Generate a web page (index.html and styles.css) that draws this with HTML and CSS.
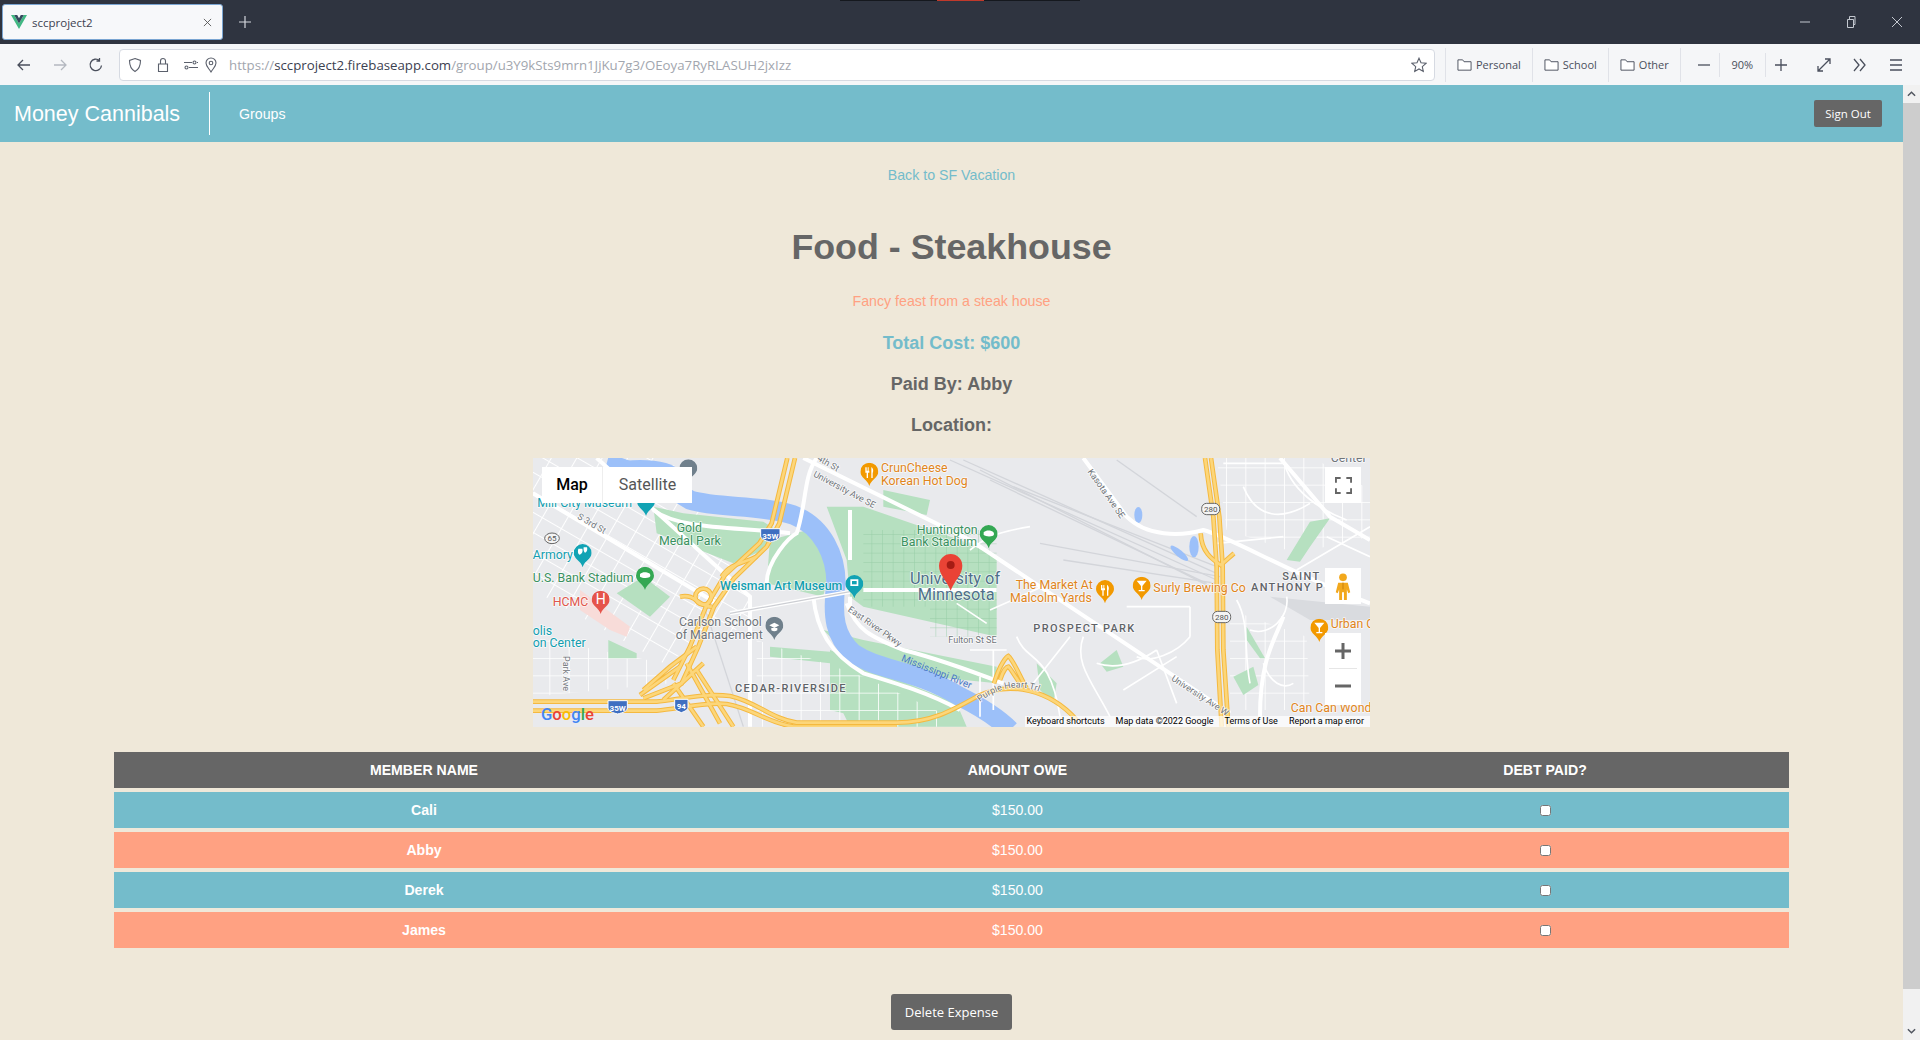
FILE: index.html
```html
<!DOCTYPE html>
<html lang="en">
<head>
  <meta charset="UTF-8">
  <title>sccproject2</title>
  <link rel="stylesheet" href="styles.css">
</head>
<body>
<div class="browser">
  <!-- tab strip -->
  <div class="tabbar">
    <div class="sharing-strip"><span></span></div>
    <div class="tab">
      <svg class="favicon" viewBox="0 0 16 14"><path fill="#41b883" d="M0 0h3.2L8 8.5 12.8 0H16L8 14z"/><path fill="#35495e" d="M3.2 0h3L8 3.2 9.8 0h3L8 8.5z"/></svg>
      <span class="tab-title">sccproject2</span>
      <svg class="tab-close" viewBox="0 0 10 10"><path d="M1 1l8 8M9 1l-8 8"/></svg>
    </div>
    <svg class="newtab" viewBox="0 0 12 12"><path d="M6 0v12M0 6h12"/></svg>
    <div class="window-controls">
      <svg viewBox="0 0 12 12"><path d="M1 6h10"/></svg>
      <svg viewBox="0 0 12 12"><path d="M2.500 3.500h6v8h-6zM4.500 3.500v-3h5.500v8h-1.500"/></svg>
      <svg viewBox="0 0 12 12"><path d="M1 1l10 10M11 1L1 11"/></svg>
    </div>
  </div>

  <!-- nav toolbar -->
  <div class="toolbar">
    <svg class="tool back" viewBox="0 0 16 16"><path d="M14 8H2M7 3L2 8l5 5"/></svg>
    <svg class="tool forward" viewBox="0 0 16 16"><path d="M2 8h12M9 3l5 5-5 5"/></svg>
    <svg class="tool reload" viewBox="0 0 16 16"><path d="M13.500 8.500A5.700 5.700 0 1 1 11.500 3.500M11.500 1v3h-3"/></svg>
    <div class="urlbar">
      <svg class="url-icon" viewBox="0 0 16 16"><path d="M8 1.500l5.500 2c0 5-1 8.500-5.500 11-4.500-2.500-5.500-6-5.500-11z"/></svg>
      <svg class="url-icon" viewBox="0 0 16 16"><path d="M3.500 7h9v7.500h-9zM5.500 7V4a2.500 2.500 0 0 1 5 0v3"/></svg>
      <svg class="url-icon perm" viewBox="0 0 16 16"><circle cx="3.500" cy="10.500" r="1.500"/><circle cx="11.500" cy="5.500" r="1.500"/><path d="M1 5.500h8M14 5.500h1M6 10.500h9"/></svg>
      <svg class="url-icon loc" viewBox="0 0 16 16"><path d="M8 15C5.500 11 3 9 3 6a5 5 0 0 1 10 0c0 3-2.500 5-5 9z"/><circle cx="8" cy="6" r="1.800"/></svg>
      <div class="url"><span class="url-dim">https://</span><span class="url-host">sccproject2.firebaseapp.com</span><span class="url-dim">/group/u3Y9kSts9mrn1JjKu7g3/OEoya7RyRLASUH2jxIzz</span></div>
      <svg class="url-icon star" viewBox="0 0 16 16"><path d="M8 1.200l2 4.600 5 .5-3.700 3.300 1 4.900L8 12l-4.300 2.500 1-4.900L1 6.300l5-.5z"/></svg>
    </div>
    <div class="bookmarks">
      <div class="bookmark"><svg viewBox="0 0 16 14"><path d="M1 12.500v-11h5l1.500 2h7.500v9z"/></svg>Personal</div>
      <div class="bookmark"><svg viewBox="0 0 16 14"><path d="M1 12.500v-11h5l1.500 2h7.500v9z"/></svg>School</div>
      <div class="bookmark"><svg viewBox="0 0 16 14"><path d="M1 12.500v-11h5l1.500 2h7.500v9z"/></svg>Other</div>
    </div>
    <div class="zoom-controls">
      <svg class="tool" viewBox="0 0 14 14"><path d="M1 7h12"/></svg>
      <span class="zoom-value">90%</span>
      <svg class="tool" viewBox="0 0 14 14"><path d="M7 1v12M1 7h12"/></svg>
    </div>
    <svg class="tool expand" viewBox="0 0 16 16"><path d="M2 14L14 2M9 2h5v5M2 9v5h5"/></svg>
    <svg class="tool more" viewBox="0 0 16 16"><path d="M3 2l5 6-5 6M9 2l5 6-5 6"/></svg>
    <svg class="tool menu" viewBox="0 0 16 16"><path d="M2 3h12M2 8h12M2 13h12"/></svg>
  </div>

  <div class="viewport">
    <div class="page">
      <nav class="navbar">
        <a class="brand">Money Cannibals</a>
        <a class="nav-link">Groups</a>
        <button class="btn btn-signout">Sign Out</button>
      </nav>

      <main class="expense">
        <a class="back-link">Back to SF Vacation</a>
        <h1>Food - Steakhouse</h1>
        <p class="description">Fancy feast from a steak house</p>
        <h3 class="total">Total Cost: $600</h3>
        <h3 class="detail">Paid By: Abby</h3>
        <h3 class="detail">Location:</h3>

        <div class="map">
          <!-- viewBox units are 1/3 px, that was easier to read off the map -->
          <svg class="map-canvas" viewBox="9 24 2511 807">
            <defs>
              <pattern id="gridSkew" width="66" height="52" patternUnits="userSpaceOnUse" patternTransform="rotate(30)">
                <path d="M0 0H66M0 0V52" stroke="#fff" stroke-width="6" fill="none"/>
              </pattern>
              <pattern id="gridFlat" width="58" height="52" patternUnits="userSpaceOnUse">
                <path d="M0 0H58M0 0V52" stroke="#fff" stroke-width="5" fill="none"/>
              </pattern>
              <pattern id="gridCampus" width="32" height="28" patternUnits="userSpaceOnUse">
                <path d="M0 0H32M0 0V28" stroke="#8fc8a0" stroke-width="3" fill="none"/>
              </pattern>
              <symbol id="pin" viewBox="0 0 54 70">
                <path d="M27 70C22 50 0 45 0 27a27 27 0 0 1 54 0c0 18-22 23-27 43z"/>
              </symbol>
              <g id="hwyLines">
                <path d="M795 24L748 220L710 290L612 385L552 470L505 590L455 700L340 745"/>
                <path d="M772 24L725 220L688 280L585 375L528 470L480 590L430 690"/>
                <path d="M9 755H380C440 750 520 728 600 738C680 755 720 805 800 818H1100C1200 818 1260 785 1340 740C1440 690 1560 720 1640 810"/>
                <path d="M9 782H380C440 778 520 755 590 762C670 775 700 815 790 830H1100"/>
                <path d="M500 590L420 650L340 720M470 640L570 820M500 660L610 830M430 700L520 830M450 650L330 735M520 640L400 750"/>
                <path d="M2025 24L2050 200L2060 350L2062 600L2075 830"/>
                <path d="M2043 24L2068 200L2078 350L2080 600L2095 830"/>
                <path d="M2012 250C2015 310 2050 330 2072 345C2090 330 2100 320 2112 310"/>
                <path d="M1392 700C1410 640 1430 620 1435 618C1450 630 1470 680 1490 715M1410 690C1420 660 1430 650 1435 650C1445 660 1455 680 1470 700"/>
                <path d="M450 440C500 430 500 470 545 470"/>
                <circle cx="520" cy="440" r="24"/>
                <path d="M575 380C600 340 640 340 680 320"/>
              </g>
            </defs>

            <rect class="land" x="9" y="24" width="2511" height="807"/>

            <!-- street grids -->
            <polygon fill="url(#gridSkew)" points="9,24 420,24 660,440 660,520 400,640 9,420"/>
            <polygon fill="url(#gridFlat)" points="9,560 400,640 420,700 9,740"/>
            <polygon fill="url(#gridFlat)" points="2060,24 2350,24 2520,120 2520,260 2300,310 2090,240"/>
            <polygon fill="url(#gridFlat)" points="2100,480 2330,560 2340,780 2100,780"/>
            <polygon class="rail-wedge" points="2220,440 2520,470 2520,510 2340,510"/>
            <polygon class="pink" points="150,420 300,530 290,560 240,540 150,480"/>

            <!-- rail lines -->
            <g class="rail">
              <path d="M1260 30L2060 390"/><path d="M1300 30L2060 370"/><path d="M1380 90L2030 400"/>
              <path d="M1450 110L2060 350"/><path d="M1530 280L2070 380"/><path d="M1760 30L2000 200"/>
              <path d="M1350 60L2040 410"/><path d="M1600 330L2060 400"/><path d="M520 460L640 830"/>
            </g>

            <!-- parks -->
            <g class="park">
              <polygon points="370,170 460,190 700,215 740,240 700,300 610,340 380,250"/>
              <polygon points="720,270 870,230 900,330 880,440 710,400"/>
              <polygon points="890,170 1000,170 1290,270 1400,320 1400,560 1000,470 960,440 950,330"/>
              <polygon points="880,540 1000,570 1400,650 1400,700 1100,670 950,610"/>
              <polygon points="900,600 950,620 1010,650 1280,760 1310,830 960,830 940,790 900,780"/>
              <polygon points="720,590 900,605 900,640 720,620"/>
              <polygon points="260,430 340,380 420,440 360,500"/>
              <polygon points="235,570 320,610 320,625 235,625"/>
              <polygon points="1060,120 1200,150 1190,195 1060,170"/>
              <polygon points="2270,330 2340,215 2400,205 2340,290 2310,335"/>
              <polygon points="1710,640 1760,600 1780,650 1730,665"/>
              <polygon points="2110,680 2170,650 2185,705 2140,735"/>
              <polygon points="2150,530 2205,625 2190,625 2150,570"/>
              <polygon points="1520,640 1580,700 1570,760 1530,720"/>
            </g>
            <rect class="campus" x="1000" y="240" width="400" height="230" fill="url(#gridCampus)"/>
            <rect class="campus" x="1200" y="470" width="200" height="90" fill="url(#gridCampus)"/>
            <polygon fill="url(#gridFlat)" points="680,570 1000,680 1260,800 1260,830 680,830"/>

            <!-- water -->
            <path class="river" d="M230 40C300 60 420 110 480 150C560 175 700 165 790 195C880 230 918 320 918 400C905 500 915 560 970 610C1050 665 1150 655 1290 740C1350 770 1400 800 1440 840"/>
            <ellipse class="water" cx="330" cy="60" rx="110" ry="30"/>
            <ellipse class="water" cx="1825" cy="195" rx="12" ry="24"/>
            <ellipse class="water" cx="1992" cy="290" rx="14" ry="32"/>
            <ellipse class="water" cx="1948" cy="310" rx="34" ry="10" transform="rotate(40 1948 310)"/>

            <!-- minor streets -->
            <g class="street" transform="translate(1260 0)">
              <path d="M200 560C230 640 300 600 330 800M60 300C120 250 180 240 240 230M120 480L300 400M250 700L360 560"/>
              <path d="M400 560C370 640 430 700 480 800M440 640C500 660 560 640 620 600M620 600L680 760M520 720L680 620"/>
              <path d="M720 470V560M530 470H720M720 560C680 610 600 640 560 620"/>
              <path d="M860 450C900 520 880 600 900 700M940 640C960 700 1000 720 1030 700M900 540C960 560 1020 500 1010 440"/>
              <path d="M820 40H1000M880 110C920 210 1000 210 1080 160M1000 30C1020 120 1110 180 1190 210M1040 360L1260 230"/>
              <path d="M800 280L1000 260M1130 260L1260 320"/>
              <path d="M20 460L110 520M60 600H170M90 680V800M130 600V780"/>
            </g>

            <!-- main streets -->
            <g class="road">
              <path d="M200 24L660 440V830"/>
              <path d="M9 130L560 460"/>
              <path d="M600 490L960 425"/>
              <path d="M1000 420H1400"/>
              <path d="M820 24L1320 270L2100 790"/>
              <path d="M1660 24L1790 200C1850 260 1950 260 2020 240C2100 260 2300 380 2520 460"/>
              <path d="M710 400C710 330 780 260 800 250C830 160 820 80 860 24"/>
              <path d="M950 460C980 540 1020 560 1120 600C1200 620 1290 650 1420 700"/>
              <path d="M850 440C860 540 900 610 1000 670C1100 700 1200 730 1290 780"/>
              <path d="M370 180C450 240 620 230 780 250"/>
              <path d="M960 180V330M960 440V470"/>
              <path d="M2250 24L2400 200L2520 270"/>
              <path d="M2260 500C2240 560 2190 620 2190 800"/>
            </g>
            <path class="road-thin" d="M600 490L960 425"/>

            <!-- highways, same lines stroked twice -->
            <use href="#hwyLines" class="hwy-edge"/>
            <use href="#hwyLines" class="hwy"/>

            <!-- street names -->
            <g class="lbl-street">
              <text transform="translate(140 205) rotate(30)">S 3rd St</text>
              <text transform="translate(860 30) rotate(30)">4th St</text>
              <text transform="translate(848 78) rotate(28)">University Ave SE</text>
              <text transform="translate(952 482) rotate(35)">East River Pkwy</text>
              <text transform="translate(100 618) rotate(90)">Park Ave</text>
              <text x="1255" y="578">Fulton St SE</text>
              <text transform="translate(1672 65) rotate(55)">Kasota Ave SE</text>
              <text transform="translate(1922 690) rotate(33)">University Ave W</text>
            </g>
            <text class="lbl-river" transform="translate(1112 632) rotate(22)">Mississippi River</text>
            <path id="purpleArc" class="no-paint" d="M1350 756C1420 700 1500 695 1590 760"/>
            <text class="lbl-street"><textPath href="#purpleArc">Purple Heart Trl</textPath></text>

            <!-- road shields -->
            <g class="shield-i">
              <path d="M692 236h58v22c0 10-14 14-29 18-15-4-29-8-29-18z"/>
              <path d="M234 752h58v22c0 10-14 14-29 18-15-4-29-8-29-18z"/>
              <path d="M434 748h40v24c0 8-10 12-20 16-10-4-20-8-20-16z"/>
            </g>
            <g class="shield-text">
              <text x="721" y="266">35W</text><text x="263" y="782">35W</text><text x="454" y="778">94</text>
            </g>
            <g class="shield-s">
              <rect x="2015" y="160" width="54" height="34" rx="15"/>
              <rect x="2048" y="484" width="54" height="34" rx="15"/>
              <ellipse cx="66" cy="265" rx="22" ry="16"/>
            </g>
            <g class="shield-label">
              <text x="2042" y="186">280</text><text x="2075" y="510">280</text><text x="66" y="273">65</text>
            </g>

            <!-- places -->
            <use href="#pin" class="pin-grey" x="448" y="28" width="54" height="70"/>
            <use href="#pin" class="pin-teal" x="321" y="130" width="54" height="68"/>
            <use href="#pin" class="pin-teal" x="131" y="282" width="54" height="70"/>
            <use href="#pin" class="pin-green" x="318" y="350" width="54" height="70"/>
            <use href="#pin" class="pin-red" x="185" y="422" width="54" height="70"/>
            <use href="#pin" class="pin-grey" x="706" y="500" width="54" height="70"/>
            <use href="#pin" class="pin-teal" x="946" y="375" width="54" height="70"/>
            <use href="#pin" class="pin-orange" x="991" y="38" width="54" height="70"/>
            <use href="#pin" class="pin-green" x="1349" y="225" width="54" height="70"/>
            <use href="#pin" class="pin-orange" x="1698" y="390" width="54" height="70"/>
            <use href="#pin" class="pin-orange" x="1808" y="380" width="54" height="70"/>
            <use href="#pin" class="pin-orange" x="2341" y="506" width="54" height="70"/>

            <!-- glyphs inside the pins -->
            <g class="glyph">
              <path d="M1006 52h4v10h3V52h3v10h2v6h-4v16h-4V68h-4zM1024 52c6 2 7 12 4 17v15h-4z"/>
              <path d="M1713 405h4v10h3v-10h3v10h2v6h-4v16h-4v-16h-4zM1731 405c6 2 7 12 4 17v15h-4z"/>
              <path d="M1820 392h30l-13 16v12h7v4h-18v-4h7v-12zM2353 518h30l-13 16v12h7v4h-18v-4h7v-12z"/>
              <path d="M718 526l15-8 15 8-15 8zM724 534h18v7c-6 4-12 4-18 0z"/>
              <path d="M961 388h24v20h-24zM145 296h12c2 8 0 16-8 18-6-2-6-10-4-18zM161 292h10c2 6 0 14-6 16-4-2-5-10-4-16z"/>
              <path d="M330 372c8-8 20-6 28-2 4 4 4 10 0 12-10 4-22 2-28-2zM1361 247c8-8 20-6 28-2 4 4 4 10 0 12-10 4-22 2-28-2z"/>
            </g>
            <rect class="glyph-cut" x="966" y="393" width="14" height="10"/>
            <text class="glyph-h" x="212" y="462">H</text>

            <!-- place names -->
            <g class="lbl-poi lbl-teal">
              <text x="22" y="172">Mill City Museum</text>
              <text x="8" y="328">Armory</text>
              <text x="8" y="555">olis</text>
              <text x="8" y="592">on Center</text>
              <text class="lbl-strong" x="570" y="419">Weisman Art Museum</text>
            </g>
            <g class="lbl-poi lbl-green">
              <text x="440" y="246">Gold</text>
              <text x="387" y="284">Medal Park</text>
              <text x="8" y="395">U.S. Bank Stadium</text>
              <text x="1160" y="252">Huntington</text>
              <text x="1113" y="289">Bank Stadium</text>
            </g>
            <text class="lbl-poi lbl-red" x="68" y="467">HCMC</text>
            <g class="lbl-poi lbl-grey">
              <text x="447" y="529">Carlson School</text>
              <text x="437" y="566">of Management</text>
            </g>
            <g class="lbl-poi lbl-orange">
              <text x="1053" y="66">CrunCheese</text>
              <text x="1053" y="104">Korean Hot Dog</text>
              <text x="1457" y="417">The Market At</text>
              <text x="1440" y="455">Malcolm Yards</text>
              <text x="1870" y="425">Surly Brewing Co</text>
              <text x="2402" y="533">Urban C</text>
              <text x="2282" y="785">Can Can Wonder</text>
            </g>
            <text class="lbl-poi lbl-grey" x="2402" y="36">Center</text>
            <g class="lbl-area">
              <text x="615" y="727">CEDAR-RIVERSIDE</text>
              <text x="1510" y="545">PROSPECT PARK</text>
              <text x="2257" y="390">SAINT</text>
              <text x="2163" y="424">ANTHONY P</text>
            </g>
            <g class="lbl-campus">
              <text x="1140" y="403">University of</text>
              <text x="1163" y="450">Minnesota</text>
            </g>

            <!-- selected marker -->
            <path class="marker" d="M1262 422C1250 390 1227 375 1227 347a35 35 0 0 1 70 0c0 28-23 43-35 75z"/>
            <circle class="marker-dot" cx="1262" cy="345" r="12"/>

            <text class="google" x="33" y="810"><tspan fill="#4285f4">G</tspan><tspan fill="#ea4335">o</tspan><tspan fill="#fbbc05">o</tspan><tspan fill="#4285f4">g</tspan><tspan fill="#34a853">l</tspan><tspan fill="#ea4335">e</tspan></text>
          </svg>

          <div class="map-type">
            <span class="map-type-item active">Map</span>
            <span class="map-type-item">Satellite</span>
          </div>
          <div class="map-btn map-fullscreen">
            <svg viewBox="0 0 18 18"><path d="M1 6V1h5M12 1h5v5M17 12v5h-5M6 17H1v-5"/></svg>
          </div>
          <div class="map-btn map-pegman">
            <svg viewBox="0 0 16 28"><circle cx="8" cy="4.500" r="4" fill="#f2a81d"/><path fill="#f2a81d" d="M3 10h10l2.500 10-2 1-1.500-4v11H9v-8H7v8H4V17l-1.500 4-2-1z"/><path d="M8 10v7" stroke="#c77f0a" fill="none"/></svg>
          </div>
          <div class="map-zoom">
            <svg viewBox="0 0 18 18"><path d="M9 1v16M1 9h16"/></svg>
            <span class="map-zoom-sep"></span>
            <svg viewBox="0 0 18 18"><path d="M1 9h16"/></svg>
          </div>
          <div class="map-attrib">
            <span>Keyboard shortcuts</span>
            <span>Map data ©2022 Google</span>
            <span>Terms of Use</span>
            <span>Report a map error</span>
          </div>
        </div>

        <table class="members">
          <colgroup><col class="col-name"><col class="col-amount"><col class="col-paid"></colgroup>
          <thead>
            <tr><th>MEMBER NAME</th><th>AMOUNT OWE</th><th>DEBT PAID?</th></tr>
          </thead>
          <tbody>
            <tr><td class="member">Cali</td><td>$150.00</td><td><input type="checkbox"></td></tr>
            <tr><td class="member">Abby</td><td>$150.00</td><td><input type="checkbox"></td></tr>
            <tr><td class="member">Derek</td><td>$150.00</td><td><input type="checkbox"></td></tr>
            <tr><td class="member">James</td><td>$150.00</td><td><input type="checkbox"></td></tr>
          </tbody>
        </table>

        <button class="btn btn-delete">Delete Expense</button>
      </main>
    </div>

    <div class="scrollbar">
      <svg class="scroll-arrow" viewBox="0 0 10 6"><path d="M1 5l4-4 4 4"/></svg>
      <div class="scroll-thumb"></div>
      <div class="scroll-track"></div>
      <svg class="scroll-arrow" viewBox="0 0 10 6"><path d="M1 1l4 4 4-4"/></svg>
    </div>
  </div>
</div>
</body>
</html>
```

FILE: styles.css
```css
* {
  box-sizing: border-box;
  margin: 0;
  padding: 0;
}

html, body {
  height: 100%;
  overflow: hidden;
}

body {
  font-family: "Liberation Sans", Arial, sans-serif;
  background-color: #efe8d9;
  color: #666;
}

.browser {
  display: flex;
  flex-direction: column;
  height: 100vh;
}

/* Tab strip */
.tabbar {
  position: relative;
  display: flex;
  align-items: center;
  flex: 0 0 44px;
  background-color: #2f3440;
  padding-left: 2px;
}

.sharing-strip {
  position: absolute;
  top: 0;
  left: 840px;
  width: 240px;
  height: 1px;
  background-color: #15181e;
}

.sharing-strip span {
  display: block;
  width: 47px;
  height: 1px;
  margin-left: 97px;
  background-color: #c0392b;
}

.tab {
  display: flex;
  align-items: center;
  width: 221px;
  height: 36px;
  background-color: #f7f8fa;
  border: 1px solid #7aa5d2;
  border-radius: 3px;
  padding: 0 8px;
}

.favicon {
  width: 16px;
  height: 14px;
  margin-right: 5px;
}

.tab-title {
  flex: 1;
  font-family: "Open Sans", sans-serif;
  font-size: 11.500px;
  color: #3c4150;
}

.tab-close {
  width: 9px;
  height: 9px;
  margin-right: 2px;
  fill: none;
  stroke: #555;
}

.newtab {
  width: 12px;
  height: 12px;
  margin-left: 16px;
  fill: none;
  stroke: #d5d8de;
  stroke-width: 1.2;
}

.window-controls {
  display: flex;
  gap: 34px;
  margin-left: auto;
  margin-right: 17px;
}

.window-controls svg {
  width: 12px;
  height: 12px;
  fill: none;
  stroke: #c4c8d0;
}

/* Toolbar */
.toolbar {
  display: flex;
  align-items: center;
  flex: 0 0 41px;
  background-color: #f5f6f8;
  color: #4a4f5c;
}

.tool {
  flex: none;
  width: 16px;
  height: 16px;
  fill: none;
  stroke: #4a4f5c;
  stroke-width: 1.3;
}

.back { margin-left: 16px; }
.forward { margin-left: 20px; stroke: #b4b8c0; }
.reload { margin-left: 20px; }

.urlbar {
  display: flex;
  align-items: center;
  width: 1316px;
  height: 32px;
  margin-left: 15px;
  padding: 0 7px;
  background-color: #fff;
  border: 1px solid #d6dae2;
  border-radius: 4px;
}

.url-icon {
  flex: none;
  width: 16px;
  height: 16px;
  margin-right: 12px;
  fill: none;
  stroke: #5b606c;
  stroke-width: 1.1;
}

.url-icon.perm { margin-right: 4px; }
.url-icon.loc { margin-right: 10px; }
.url-icon.star { margin: 0 0 0 auto; }

.url {
  font-family: "Open Sans", sans-serif;
  font-size: 13.250px;
  white-space: nowrap;
}

.url-dim { color: #a2a6ae; }
.url-host { color: #3c4150; }

.bookmarks {
  display: flex;
  height: 34px;
  margin-left: 10px;
  border-left: 1px solid #e0e2e8;
}

.bookmark {
  display: flex;
  align-items: center;
  gap: 4px;
  padding: 0 11px;
  border-right: 1px solid #e0e2e8;
  font-family: "Open Sans", sans-serif;
  font-size: 11px;
}

.bookmark svg {
  width: 15px;
  height: 14px;
  fill: #fff;
  stroke: #4a4f5c;
}

.zoom-controls {
  display: flex;
  align-items: center;
  margin-left: 16px;
  font-family: "Open Sans", sans-serif;
  font-size: 11px;
}

.zoom-controls .tool {
  width: 14px;
  height: 14px;
}

.zoom-value {
  width: 47px;
  height: 24px;
  line-height: 24px;
  margin: 0 8px;
  text-align: center;
  border-left: 1px solid #e0e2e8;
  border-right: 1px solid #e0e2e8;
}

.expand { margin-left: 28px; }
.more { margin-left: 19px; }
.menu { margin-left: 21px; }

/* Page area */
.viewport {
  display: flex;
  flex: 1;
  min-height: 0;
}

.page {
  flex: 1;
  overflow: hidden;
}

.scrollbar {
  display: flex;
  flex-direction: column;
  align-items: center;
  flex: 0 0 17px;
  background-color: #f1f1f1;
}

.scroll-arrow {
  flex: none;
  width: 9px;
  height: 6px;
  margin: 6px 0;
  fill: none;
  stroke: #50555f;
  stroke-width: 1.6;
}

.scroll-thumb {
  flex: 0 0 886px;
  width: 100%;
  background-color: #cdcdcd;
}

.scroll-track {
  flex: 1;
}

.navbar {
  display: flex;
  align-items: center;
  height: 57px;
  background-color: #74bccb;
  color: #fff;
}

.brand {
  width: 210px;
  height: 43px;
  line-height: 45px;
  padding-left: 14px;
  font-size: 21.500px;
  border-right: 1px solid #fff;
  white-space: nowrap;
}

.nav-link {
  margin-left: 29px;
  font-size: 14.200px;
}

.btn {
  font-family: "Open Sans", sans-serif;
  color: #fff;
  background-color: #666;
  border: none;
  border-radius: 2px;
}

.btn-signout {
  width: 68px;
  height: 27px;
  margin-left: auto;
  margin-right: 21px;
  font-size: 11.500px;
}

.expense {
  display: flex;
  flex-direction: column;
  align-items: center;
  padding-top: 25px;
}

.back-link {
  font-size: 14.200px;
  line-height: 17px;
  color: #74bccb;
}

h1 {
  margin-top: 42px;
  font-size: 35.800px;
  line-height: 42px;
  color: #666;
}

.description {
  margin-top: 25px;
  font-size: 14.200px;
  line-height: 17px;
  color: #ffa182;
}

.total, .detail {
  font-size: 18px;
  line-height: 21px;
}

.total {
  margin-top: 23px;
  color: #74bccb;
}

.detail {
  margin-top: 20px;
  color: #666;
}

/* Map */
.map {
  position: relative;
  width: 837px;
  height: 269px;
  margin-top: 22px;
  overflow: hidden;
}

.map-canvas {
  display: block;
  width: 837px;
  height: 269px;
  font-family: Roboto, sans-serif;
}

.land { fill: #e9eaed; }
.pink { fill: #f8dcd9; }
.no-paint { fill: none; }
.rail-wedge { fill: #d9dbdf; }
.rail path { fill: none; stroke: #d3d5da; stroke-width: 4; }
.park polygon { fill: #b6e0c0; }
.campus { opacity: .8; }
.river { fill: none; stroke: #9cc0f9; stroke-width: 58; }
.water { fill: #9cc0f9; }
.street path { fill: none; stroke: #fff; stroke-width: 5; }
.road path { fill: none; stroke: #fff; stroke-width: 12; }
.road-thin { fill: none; stroke: #ccced3; stroke-width: 4; }
.hwy-edge, .hwy { fill: none; }
.hwy-edge { stroke: #f5b93f; stroke-width: 14; }
.hwy { stroke: #fcd67a; stroke-width: 8; }

.shield-i path { fill: #3f6fc1; stroke: #fff; stroke-width: 3; }
.shield-text text { fill: #fff; font-size: 24px; font-weight: 700; text-anchor: middle; }
.shield-s rect, .shield-s ellipse { fill: #f4f4f4; stroke: #666; stroke-width: 3; }
.shield-label text { fill: #555; font-size: 24px; text-anchor: middle; }

.pin-grey { fill: #70808c; }
.pin-teal { fill: #12a3b4; }
.pin-green { fill: #34a853; }
.pin-red { fill: #e5544b; }
.pin-orange { fill: #f29900; }

.glyph { fill: #fff; }
.glyph-cut { fill: #12a3b4; }
.glyph-h { fill: #fff; font-size: 42px; text-anchor: middle; }

/* labels have a soft white halo, like the real tiles */
.lbl-poi, .lbl-area, .lbl-campus, .lbl-street, .lbl-river {
  paint-order: stroke;
  stroke: rgba(255, 255, 255, 0.75);
  stroke-width: 5px;
  stroke-linejoin: round;
}

.lbl-poi { font-size: 37px; }
.lbl-teal { fill: #129eaf; }
.lbl-strong { font-weight: 500; }
.lbl-green { fill: #3a9160; }
.lbl-red { fill: #e0574c; }
.lbl-grey { fill: #70757a; }
.lbl-orange { fill: #e0851c; }
.lbl-street { fill: #70757a; font-size: 27px; }
.lbl-river { fill: #4a78c8; font-size: 30px; stroke: none; }
.lbl-area { fill: #5f6368; font-size: 33px; font-weight: 500; letter-spacing: 4px; }
.lbl-campus { fill: #4f7089; font-size: 49px; }

.marker { fill: #ea4335; }
.marker-dot { fill: #a51c14; }
.google { font-size: 50px; font-weight: 500; }

.map-type {
  position: absolute;
  top: 9px;
  left: 9px;
  display: flex;
  height: 36px;
  background-color: #fff;
  font-family: Roboto, sans-serif;
  font-size: 16px;
  line-height: 36px;
  color: #565656;
}

.map-type-item {
  width: 89px;
  text-align: center;
}

.map-type-item.active {
  width: 61px;
  font-weight: 500;
  color: #000;
  border-right: 1px solid #eee;
}

.map-btn {
  position: absolute;
  left: 792px;
  display: flex;
  align-items: center;
  justify-content: center;
  width: 36px;
  height: 36px;
  background-color: #fff;
}

.map-fullscreen { top: 9px; }
.map-pegman { top: 110px; }

.map-fullscreen svg {
  width: 17px;
  height: 17px;
  fill: none;
  stroke: #666;
  stroke-width: 2;
}

.map-pegman svg {
  width: 16px;
  height: 27px;
}

.map-zoom {
  position: absolute;
  top: 175px;
  left: 792px;
  display: flex;
  flex-direction: column;
  align-items: center;
  width: 36px;
  height: 72px;
  padding-top: 9px;
  background-color: #fff;
}

.map-zoom svg {
  width: 18px;
  height: 18px;
  fill: none;
  stroke: #666;
  stroke-width: 3;
}

.map-zoom-sep {
  width: 28px;
  height: 1px;
  margin: 8px 0;
  background-color: #e6e6e6;
}

.map-attrib {
  position: absolute;
  right: 0;
  bottom: 0;
  display: flex;
  gap: 11px;
  height: 11px;
  padding: 0 6px 0 1px;
  background-color: rgba(255, 255, 255, 0.7);
  font-family: Roboto, sans-serif;
  font-size: 9px;
  line-height: 11px;
  color: #000;
  white-space: nowrap;
}

/* Member table */
.members {
  width: 88%;
  margin-top: 21px;
  table-layout: fixed;
  border-collapse: separate;
  border-spacing: 0 4.330px;
  font-size: 14.100px;
  color: #fff;
  text-align: center;
}

.col-name { width: 620px; }
.col-amount { width: 567px; }
.col-paid { width: 488px; }

.members th, .members td {
  height: 36px;
  padding: 0;
}

.members th {
  background-color: #666;
}

.member {
  font-weight: 700;
}

.members tbody tr:nth-child(odd) td {
  background-color: #74bccb;
}

.members tbody tr:nth-child(even) td {
  background-color: #ffa182;
}

.members input {
  display: block;
  width: 11px;
  height: 11px;
  margin: 0 auto;
}

.btn-delete {
  width: 121px;
  height: 36px;
  margin-top: 42px;
  border-radius: 3px;
  font-size: 13px;
}
```
